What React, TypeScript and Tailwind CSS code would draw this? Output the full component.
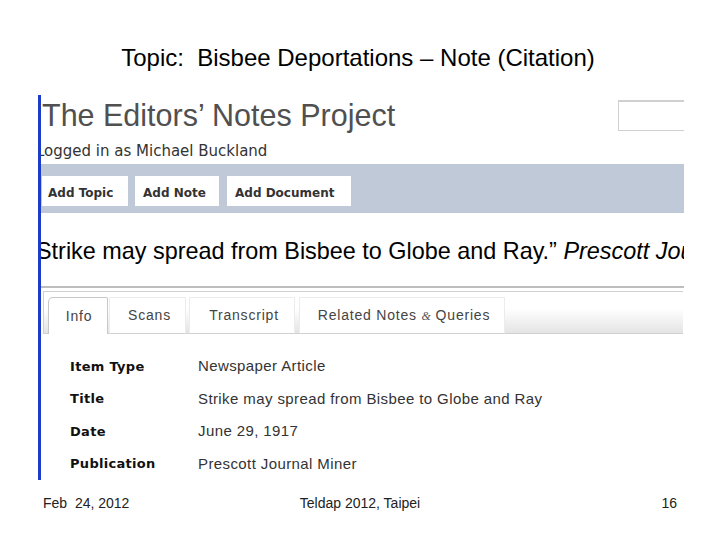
import React from 'react'

const rows = [
  { label: 'Item Type', value: 'Newspaper Article' },
  { label: 'Title', value: 'Strike may spread from Bisbee to Globe and Ray' },
  { label: 'Date', value: 'June 29, 1917' },
  { label: 'Publication', value: 'Prescott Journal Miner' },
]

const tabs = [
  { label: 'Info', width: 'w-[60px]', gap: 'ml-0', active: true },
  { label: 'Scans', width: 'w-[77px]', gap: 'ml-[1px]', active: false },
  { label: 'Transcript', width: 'w-[106px]', gap: 'ml-[3px]', active: false },
  { label: 'Related Notes', width: 'w-[206px]', gap: 'ml-[4px]', active: false, amp: true },
]

export default function App() {
  return (
    <div className="w-[720px] h-[540px] bg-white overflow-hidden font-['Liberation_Sans',Arial,sans-serif]">
      {/* slide title */}
      <div className="pt-[44px] pr-[4px] text-center text-[24px] leading-[28px] text-black whitespace-pre">
        Topic:  Bisbee Deportations – Note (Citation)
      </div>

      {/* screenshot of the site */}
      <div className="mt-[23px] ml-[38px] w-[646px] h-[385px] border-l-[3px] border-[#1a3cc8] overflow-hidden">
        <div className="flex items-start pt-[2px]">
          <div className="ml-[1px] text-[30.5px] leading-[36px] text-[#505050] whitespace-nowrap">
            The Editors’ Notes Project
          </div>
          <div className="ml-auto mt-[3px] w-[66px] h-[31px] border border-r-0 border-t-2 border-[#d0d0d0]" />
        </div>

        <div className="-ml-[5px] mt-[9px] text-[15px] leading-[18px] text-[#333] whitespace-nowrap font-['DejaVu_Sans',Verdana,sans-serif]">
          Logged in as Michael Buckland
        </div>

        <div className="mt-[4px] h-[49px] bg-[#c0c9d8] flex items-start pt-[12px] pl-[1px] gap-[7px] font-['DejaVu_Sans',Verdana,sans-serif] font-bold text-[12px] text-[#333]">
          <div className="w-[86px] h-[30px] bg-white flex items-center pl-[6px] pt-[3px]">Add Topic</div>
          <div className="w-[84px] h-[30px] bg-white flex items-center pl-[8px] pt-[3px]">Add Note</div>
          <div className="ml-[1px] w-[124px] h-[30px] bg-white flex items-center pl-[8px] pt-[3px]">Add Document</div>
        </div>

        <div className="-ml-[5px] mt-[24px] text-[23.4px] leading-[28px] text-black whitespace-nowrap">
          Strike may spread from Bisbee to Globe and Ray.” <span className="italic">Prescott Journal Miner</span>
        </div>

        {/* tabs */}
        <div className="mt-[21px] border-t-2 border-[#bdbdbd]" />
        <div className="mt-[3px] ml-[2px] mr-[1px] h-[43px] border-t border-l border-b border-[#d0d0d0] bg-linear-to-b from-white from-40% to-[#e4e4e4] flex items-end pl-[4px]">
          {tabs.map((t) => (
            <div
              key={t.label}
              className={
                t.gap + ' ' + t.width + ' h-[37px] -mb-px flex items-center justify-center text-[14px] tracking-[0.8px] text-[#444] whitespace-nowrap ' +
                (t.active
                  ? 'bg-white border border-b-0 border-[#c8c8c8] rounded-tl-[5px] rounded-tr-[2px] pl-[2px]'
                  : 'bg-white border border-[#ececec] border-b-[#d0d0d0] pl-[4px]')
              }
            >
              {t.label}
              {t.amp && (
                <>
                  &nbsp;<span className="italic font-['Liberation_Serif',serif] text-[12px] tracking-normal text-[#555]">&amp;</span>&nbsp;Queries
                </>
              )}
            </div>
          ))}
        </div>

        {/* citation fields */}
        <div className="mt-[16px] pl-[29px]">
          {rows.map((r) => (
            <div key={r.label} className="h-[32.5px] flex items-center">
              <div className="w-[128px] font-['DejaVu_Sans',Verdana,sans-serif] font-bold text-[13px] tracking-[0.3px] text-[#111]">
                {r.label}
              </div>
              <div className="text-[15px] tracking-[0.4px] text-[#333] whitespace-nowrap">{r.value}</div>
            </div>
          ))}
        </div>
      </div>

      {/* slide footer */}
      <div className="mt-[15px] grid grid-cols-3 text-[14px] leading-[16px] text-[#222]">
        <div className="pl-[43px] whitespace-pre">Feb  24, 2012</div>
        <div className="text-center">Teldap 2012, Taipei</div>
        <div className="text-right pr-[43px]">16</div>
      </div>
    </div>
  )
}
